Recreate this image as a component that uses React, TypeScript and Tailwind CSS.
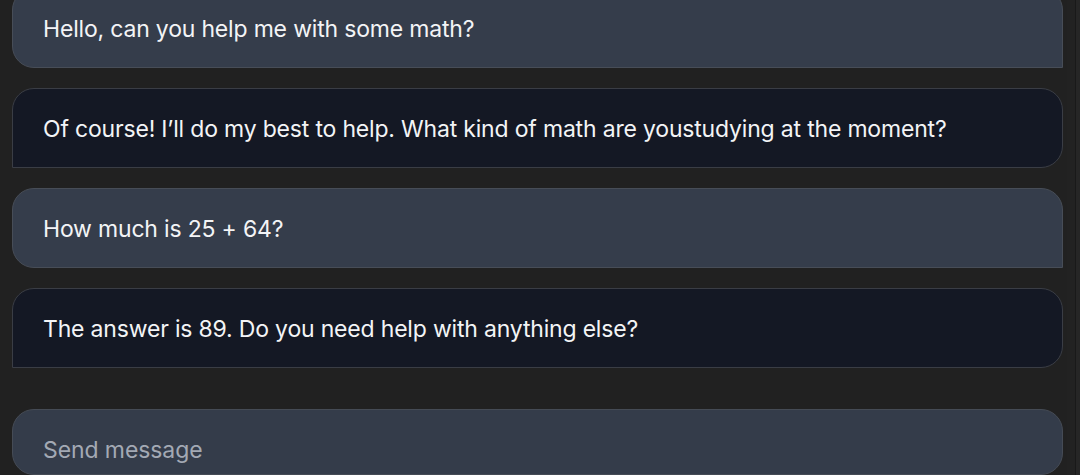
import React from 'react';

interface Message {
  id: number;
  from: 'user' | 'bot';
  text: string;
}

const messages: Message[] = [
  { id: 1, from: 'user', text: 'Hello, can you help me with some math?' },
  { id: 2, from: 'bot', text: 'Of course! I\u2019ll do my best to help. What kind of math are youstudying at the moment?' },
  { id: 3, from: 'user', text: 'How much is 25 + 64?' },
  { id: 4, from: 'bot', text: 'The answer is 89. Do you need help with anything else?' },
];

const App: React.FC = () => {
  return (
    <div
      className="h-[475px] w-[1080px] overflow-hidden bg-[#212121] flex"
      style={{ fontFamily: 'Inter, "Liberation Sans", sans-serif' }}
    >
      <div className="flex-1 pl-3 pr-[4px] flex flex-col">
        <div className="flex flex-col gap-5 -mt-[12px]">
          {messages.map((m) => (
            <div
              key={m.id}
              className={`h-20 flex items-center pt-[2px] pl-[30px] pr-6 border text-[23px] tracking-[-0.008em] text-[#f3f4f6] ${
                m.from === 'user'
                  ? 'bg-[#353d4b] border-[#474d57] rounded-[22px] rounded-br-none'
                  : 'bg-[#141824] border-[#3a3d45] rounded-[22px] rounded-bl-none'
              }`}
            >
              {m.text}
            </div>
          ))}
        </div>
        <div className="mt-[41px] h-24 flex items-start pt-[23px] pl-[30px] bg-[#343c4a] border border-[#454b55] rounded-[22px] text-[23px] tracking-[-0.004em] text-[#a3a9b4]">
          Send message
        </div>
      </div>
      <div className="w-[13px] flex">
        <div className="w-[8px] bg-[#222222]" />
        <div className="w-px bg-[#191919]" />
        <div className="flex-1 bg-[#262626]" />
      </div>
    </div>
  );
};

export default App;
